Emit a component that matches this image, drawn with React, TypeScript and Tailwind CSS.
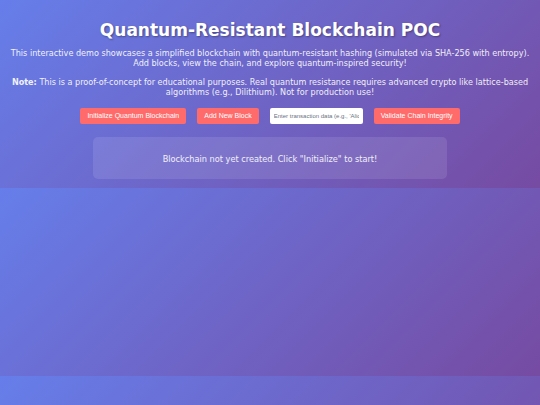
import React, { useState } from "react";

const App: React.FC = () => {
  const [data, setData] = useState("");

  return (
    <div className="min-h-[405px] w-full bg-[linear-gradient(135deg,#667eea_0%,#764ba2_100%)] bg-size-[100%_188px] bg-repeat font-['DejaVu_Sans',Verdana,sans-serif] text-white">
      <div className="flex flex-col items-center px-[10px] pt-[19px] pb-[9px] text-center">
        <h1 className="text-[17px] leading-[22px] font-bold [text-shadow:1px_1px_2px_rgba(0,0,0,0.35)]">
          Quantum-Resistant Blockchain POC
        </h1>
        <p className="mt-[7px] text-[8.1px] leading-[10px] opacity-90">
          This interactive demo showcases a simplified blockchain with quantum-resistant hashing (simulated via SHA-256 with entropy).
          <br />
          Add blocks, view the chain, and explore quantum-inspired security!
        </p>
        <p className="mt-[9px] text-[8.1px] leading-[10px] opacity-90">
          <strong>Note:</strong> This is a proof-of-concept for educational purposes. Real quantum resistance requires advanced crypto like lattice-based
          algorithms (e.g., Dilithium). Not for production use!
        </p>

        <div className="mt-[11px] flex items-center gap-[11px] font-['Liberation_Sans',Arial,sans-serif] text-[7px]">
          <button className="h-[16px] rounded-[2px] bg-[#ff6b6b] px-[7px] text-white">
            Initialize Quantum Blockchain
          </button>
          <button className="h-[16px] rounded-[2px] bg-[#ff6b6b] px-[7px] text-white">
            Add New Block
          </button>
          <input
            value={data}
            onChange={(e) => setData(e.target.value)}
            placeholder="Enter transaction data (e.g., 'Alice sends 5 BTC to Bob')"
            className="h-[16px] w-[93px] rounded-[2px] bg-white px-[4px] text-[6px] text-gray-800 placeholder:text-gray-500 outline-none"
          />
          <button className="h-[16px] rounded-[2px] bg-[#ff6b6b] px-[7px] text-white">
            Validate Chain Integrity
          </button>
        </div>

        <div className="mt-[13px] flex h-[42px] w-[354px] items-center justify-center rounded-[5px] bg-white/10 pt-[2px] text-[8.2px] text-white/90">
          Blockchain not yet created. Click "Initialize" to start!
        </div>
      </div>
    </div>
  );
};

export default App;
